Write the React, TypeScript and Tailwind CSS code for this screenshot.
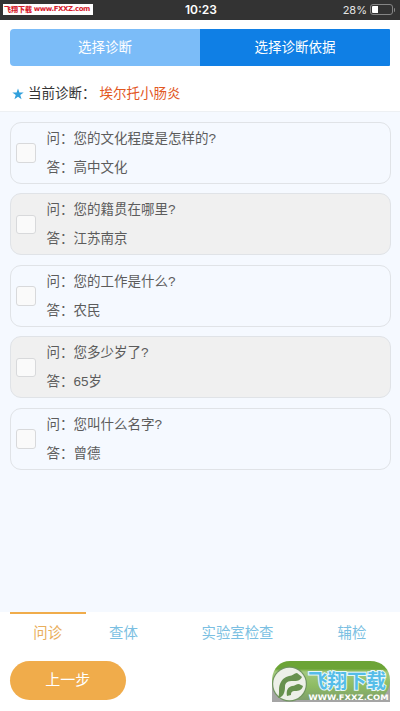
import React from "react";
import type { FC } from "react";

const RECORDS = [
  { question: "您的文化程度是怎样的?", answer: "高中文化" },
  { question: "您的籍贯在哪里?", answer: "江苏南京" },
  { question: "您的工作是什么?", answer: "农民" },
  { question: "您多少岁了?", answer: "65岁" },
  { question: "您叫什么名字?", answer: "曾德" },
];

const App = () => {
  return (
    <div className="flex h-[711px] w-[400px] flex-col overflow-hidden bg-white font-['Liberation_Sans','Noto_Sans_CJK_SC',sans-serif] text-[13.5px]">
      <StatusBar />
      <div className="mx-[10px] mt-[9.5px] flex h-[37px] shrink-0 overflow-hidden rounded-l-[4px] rounded-r-[1px] text-white">
        <button className="w-1/2 bg-[#7bbcf8] pt-[1px]">选择诊断</button>
        <button className="w-1/2 bg-[#0f7fe5] pt-[1px]">选择诊断依据</button>
      </div>
      <div className="flex h-[46px] shrink-0 items-center border-b border-[#edf0f3] pt-[11px] pl-[12px]">
        <StarIcon />
        <span className="ml-[4px] text-[#333]">当前诊断：</span>
        <span className="ml-[4px] text-[#e2581f]">埃尔托小肠炎</span>
      </div>
      <main className="flex grow flex-col gap-[9.5px] bg-[#f5f9ff] px-[9.5px] pt-[9.5px]">
        {RECORDS.map((x, i) => (
          <RecordCard key={x.question} {...x} shaded={i % 2 === 1} />
        ))}
      </main>
      <Tabs />
      <footer className="flex h-[50.5px] shrink-0 items-start justify-between pr-[9px] pl-[9.5px]">
        <button className="h-[39px] w-[116.5px] rounded-full bg-[#f0ac4b] pt-[1px] text-[15px] text-white">
          上一步
        </button>
        <SiteBadge />
      </footer>
    </div>
  );
};

export default App;

const StatusBar: FC = () => (
  <header className="grid h-[19.5px] shrink-0 grid-cols-3 items-center bg-[#333] text-white">
    <div className="ml-[3px] flex h-[11px] w-[90px] items-center justify-between bg-white px-[1px] text-[#d6202c]">
      <span className="font-['Noto_Sans_CJK_SC',sans-serif] text-[7px] leading-none font-black">
        飞翔下载
      </span>
      <span className="pr-[2px] font-['DejaVu_Sans',sans-serif] text-[7px] leading-none font-bold tracking-[-0.4px]">
        www.FXXZ.com
      </span>
    </div>
    <span className="pt-[1px] pl-[2px] text-center font-['Inter',sans-serif] text-[12px] leading-none font-semibold">
      10:23
    </span>
    <div className="flex items-center justify-end pr-[5px]">
      <span className="pt-[1px] font-['Inter',sans-serif] text-[11px] leading-none text-[#e4e4e4]">
        28%
      </span>
      <div className="ml-[3px] h-[11px] w-[23px] rounded-[3px] border border-[#858585] p-[1px]">
        <div className="h-full w-[6px] rounded-l-[1px] bg-white" />
      </div>
      <div className="ml-[1px] h-[4px] w-[1px] rounded-r bg-[#858585]" />
    </div>
  </header>
);

const StarIcon: FC = () => (
  <svg className="h-[12px] w-[12px]" viewBox="0 0 24 24" fill="#31a0dc">
    <path d="M12 0.8 14.8 9h8.6l-6.9 5.2 2.6 8.4L12 17.5l-7.1 5.1 2.6-8.4L0.6 9h8.6z" />
  </svg>
);

const RecordCard: FC<{
  question: string;
  answer: string;
  shaded: boolean;
}> = ({ question, answer, shaded }) => (
  <section
    className={`flex h-[62px] shrink-0 items-center rounded-[11px] border border-[#e0e3e7] pl-[5.5px] ${
      shaded ? "bg-[#f0f0f0]" : "bg-[#f5f9ff]"
    }`}
  >
    <span className="mt-[1px] h-[19.5px] w-[19.5px] rounded-[3px] border border-[#d8d9db] bg-[#fafafa]" />
    <div className="ml-[11px] leading-[29px] text-[#5c5c5c]">
      <p>问：{question}</p>
      <p>答：{answer}</p>
    </div>
  </section>
);

const Tabs: FC = () => (
  <nav className="flex h-[48.5px] shrink-0 pl-[10px] text-[14.4px] text-[#7bbfe2]">
    <button className="w-[75.5px] border-t-2 border-[#f0ac4b] pb-[6px] text-[#e9ae5c]">
      问诊
    </button>
    <button className="w-[76px] pb-[4px]">查体</button>
    <button className="w-[152px] pb-[4px]">实验室检查</button>
    <button className="w-[76px] pb-[4px] pl-[1px]">辅检</button>
  </nav>
);

// green pill with the download site's logo over it
const SiteBadge: FC = () => (
  <svg className="h-[42px] w-[120px]" viewBox="0 0 120 42">
    <defs>
      <linearGradient id="pill" x1="0" y1="0" x2="0" y2="1">
        <stop offset="0" stopColor="#6ca436" />
        <stop offset="0.2" stopColor="#6ca436" />
        <stop offset="0.28" stopColor="#a3c97d" />
        <stop offset="0.65" stopColor="#8dbb62" />
        <stop offset="1" stopColor="#7f9f6d" />
      </linearGradient>
    </defs>
    <path d="M1 20v21h118V20z" fill="#a5a5a5" />
    <path d="M19 0h80c12 0 20 8 20 19 0 10-6 18-14 20H16C7 36 1 29 1 18 2 7 9 0 19 0z" fill="url(#pill)" />
    <circle cx="18.5" cy="23" r="17.5" fill="#719560" />
    <circle cx="18.5" cy="23" r="16.3" fill="#edf0e8" />
    <g fill="#67914e">
      <path d="M7 37c2-5 0-9 2-14 2-5 5-7 9-8 4 0 5-3 8-3l5 4c-2 4-5 4-9 4-5 0-8 1-8 6 0 6-2 10-7 11z" />
      <path d="M16 35c-1-6 1-9 5-10 3 0 4-2 7-2l4 2c-1 4-4 5-8 5-3 0-4 1-4 4l-4 1z" />
    </g>
    <text
      x="37"
      y="27"
      textLength="78"
      fontSize="19.5"
      fontWeight="700"
      fontFamily="'Noto Sans CJK SC', sans-serif"
      fill="#55bde8"
      stroke="#e6f7fb"
      strokeWidth="2"
      paintOrder="stroke"
    >
      飞翔下载
    </text>
    <text
      x="37.5"
      y="38.5"
      textLength="80"
      lengthAdjust="spacingAndGlyphs"
      fontSize="7.5"
      fontWeight="700"
      fontFamily="'DejaVu Sans', sans-serif"
      fill="#fff"
    >
      WWW.FXXZ.COM
    </text>
  </svg>
);
